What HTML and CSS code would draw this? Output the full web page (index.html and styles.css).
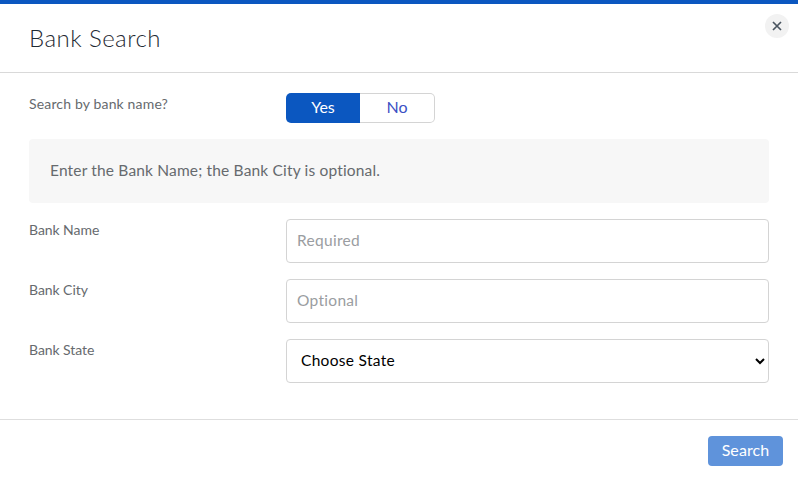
FILE: index.html
```html
<!DOCTYPE html>
<html lang="en">
<head>
<meta charset="utf-8">
<title>Bank Search</title>
<link rel="stylesheet" href="styles.css">
</head>
<body>
<div class="modal">
  <header class="modal-header">
    <h1 class="modal-title">Bank Search</h1>
    <button class="close" type="button" aria-label="Close">
      <svg width="10" height="10" viewBox="0 0 10 10" aria-hidden="true"><path d="M1 1l8 8M9 1l-8 8" stroke="#4a5560" stroke-width="1.7" fill="none"/></svg>
    </button>
  </header>
  <main class="modal-body">
    <div class="toggle-row">
      <span class="label">Search by bank name?</span>
      <div class="toggle">
        <span class="toggle-yes">Yes</span>
        <span class="toggle-no">No</span>
      </div>
    </div>
    <div class="notice">Enter the Bank Name; the Bank City is optional.</div>
    <div class="field">
      <label class="label field-label">Bank Name</label>
      <input class="control" type="text" placeholder="Required">
    </div>
    <div class="field">
      <label class="label field-label">Bank City</label>
      <input class="control" type="text" placeholder="Optional">
    </div>
    <div class="field">
      <label class="label field-label">Bank State</label>
      <select class="control select"><option>Choose State</option></select>
    </div>
  </main>
  <footer class="modal-footer">
    <button class="search" type="button">Search</button>
  </footer>
</div>
</body>
</html>
```
FILE: styles.css
```css
* { box-sizing: border-box; }
html, body { margin: 0; padding: 0; height: 100%; background: #fff; }
body { font-family: Lato, "Open Sans", sans-serif; overflow: hidden; }
.modal { border-top: 4px solid #0b57c0; }
.modal-header {
  height: 69px;
  border-bottom: 1px solid #d9d9d9;
  padding: 0 29px;
  display: flex;
  align-items: center;
  position: relative;
}
.modal-title { margin: 0 0 1px; font-size: 24px; font-weight: 300; color: #1f2a33; letter-spacing: 0.45px; line-height: 30px; }
.close {
  position: absolute;
  top: 10px;
  right: 9px;
  width: 24px;
  height: 24px;
  border: 0;
  border-radius: 50%;
  background: #f2f2f2;
  padding: 0;
  display: flex;
  align-items: center;
  justify-content: center;
}
.modal-body { padding: 20px 29px 36px; height: 346px; }
.label { font-size: 14px; color: #666a6e; line-height: 22px; letter-spacing: 0.16px; }
.field-label { letter-spacing: -0.06px; }
.toggle-row { display: flex; align-items: flex-start; }
.toggle-row .label, .field .label { width: 257px; flex: none; }
.toggle {
  width: 149px;
  height: 30px;
  display: flex;
  font-size: 16px;
  line-height: 26px;
  text-align: center;
}
.toggle-yes { width: 74px; background: #0b57c0; color: #fff; border-radius: 5px 0 0 5px; line-height: 28px; }
.toggle-no { flex: 1; color: #3b50c4; border: 1px solid #d4d4d4; border-left: 0; border-radius: 0 5px 5px 0; }
.notice {
  margin: 16px 0;
  height: 64px;
  padding: 0 21px 2px;
  display: flex;
  align-items: center;
  background: #f7f7f7;
  border-radius: 4px;
  font-size: 15.5px;
  color: #666a6e;
  letter-spacing: 0.17px;
}
.field { display: flex; align-items: flex-start; margin-bottom: 16px; }
.control {
  flex: 1;
  min-width: 0;
  height: 44px;
  border: 1px solid #d4d4d4;
  border-radius: 4px;
  padding: 0 10px 2px;
  font-family: inherit;
  font-size: 15.5px;
  letter-spacing: 0.3px;
  color: #000;
  background: #fff;
}
.control::placeholder { color: #9a9da1; opacity: 1; }
.modal-footer {
  border-top: 1px solid #dedede;
  padding: 16px 15px 0 0;
  display: flex;
  justify-content: flex-end;
}
.search {
  width: 75px;
  height: 30px;
  border: 0;
  border-radius: 4px;
  background: #5f93db;
  color: #fff;
  font-family: inherit;
  font-size: 16px;
  letter-spacing: 0.1px;
  padding: 0 0 4px;
}
```
